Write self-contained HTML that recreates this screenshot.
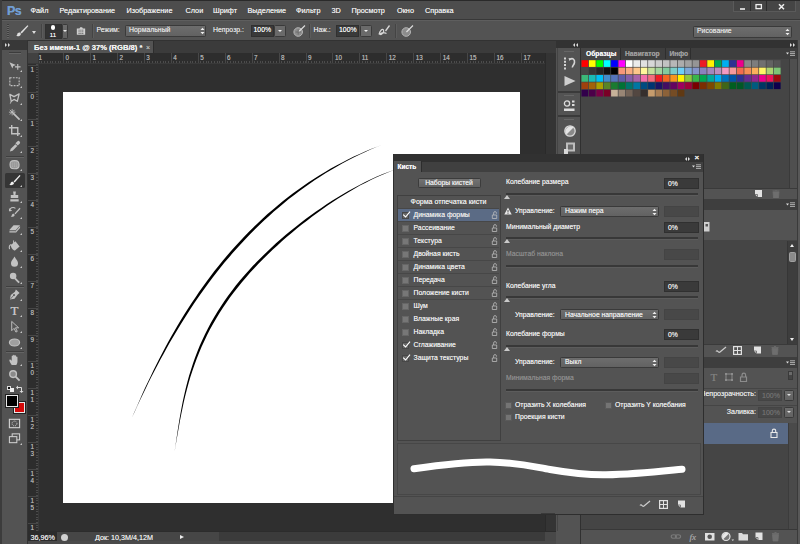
<!DOCTYPE html>
<html lang="ru"><head><meta charset="utf-8"><title>Photoshop</title>
<style>
*{margin:0;padding:0;box-sizing:border-box}
html,body{width:800px;height:544px;overflow:hidden;background:#535353}
body{position:relative;text-shadow:0 0 .6px currentColor;font-family:"Liberation Sans",sans-serif;font-size:7.5px;color:#dcdcdc;line-height:1}
div,span,i,b,em,svg{position:absolute}
.t{white-space:nowrap}
/* menu */
#menu{left:0;top:0;width:800px;height:20px;background:#4d4d4d;border-top:1px solid #2a2a2a;border-bottom:1px solid #383838}
#menu .t{top:6.1px;font-size:7.3px;color:#e6e6e6}
#ps{left:7px;top:2.5px;font-size:13.5px;font-weight:bold;color:#719dd2;letter-spacing:-0.6px;transform:scaleX(.92);transform-origin:0 0}
#wc{left:733px;top:0;width:63px;height:11px;background:#454545;border:1px solid #5a5a5a;border-top:0}
#wc b{top:0;width:1px;height:10px;background:#2c2c2c}
/* options */
#opt{left:0;top:20px;width:800px;height:21px;background:#535353;border-bottom:1px solid #323232;border-top:1px solid #5e5e5e}
#opt .t{top:6.3px;font-size:6.9px}
.dd{background:linear-gradient(#6d6d6d,#626262);border:1px solid #3a3a3a;border-radius:1.5px}
.in{background:#3a3a3a;border:1px solid #303030}
/* doc */
#tabbar{left:28px;top:41px;width:528px;height:12px;background:#3b3b3b}
#tab{left:28px;top:41px;width:126px;height:12px;background:#535353;border-right:1px solid #2d2d2d}
#tab .t{left:6px;top:3.3px;font-size:7.6px;font-weight:bold;color:#f0f0f0}
#paste{left:28px;top:53px;width:528px;height:478px;background:#2f2f2f}
#hr{left:28px;top:53px;width:517px;height:11px;background:#2d2d2d;border-bottom:1px solid #393939;overflow:hidden}
#hr b{top:0;width:1px;height:11px;background:#474747;margin-left:-28px}
#hr span{top:1.8px;font-size:6.3px;color:#adadad;margin-left:-28px}
#hr i{left:0;top:8px;width:517px;height:2px;background:repeating-linear-gradient(90deg,#4c4c4c 0 1px,transparent 1px 2.694px)}
#vr{left:28px;top:64px;width:11px;height:467px;background:#2d2d2d;border-right:1px solid #393939;overflow:hidden}
#vr b{left:0;width:11px;height:1px;background:#474747;margin-top:-64px}
#vr span{left:2.5px;font-size:6.3px;line-height:6.4px;color:#adadad;margin-top:-64px}
#vr i{left:8px;top:0;width:2px;height:467px;background:repeating-linear-gradient(180deg,#4c4c4c 0 1px,transparent 1px 2.694px)}
#corner{left:28px;top:53px;width:11px;height:11px;background:#414141;border-right:1px solid #383838;border-bottom:1px solid #383838}
#canvas{left:63px;top:92px;width:457px;height:411px;background:#fff}
#vs{left:545px;top:53px;width:11px;height:478px;background:#343434;border-left:1px solid #2a2a2a}
#status{left:28px;top:531px;width:528px;height:10px;background:#3b3b3b;border-top:1px solid #2c2c2c}
#status .t{top:1.5px;font-size:7.2px;color:#e4e4e4}
/* tools */
#tools{left:2px;top:40px;width:26px;height:504px;background:#535353;border-right:1px solid #333}
#tools .hd{left:0;top:0;width:25px;height:9.5px;background:#383838}
#tools svg{left:5.5px;width:13px;height:13px;overflow:visible;margin-top:.5px}
/* dock */
#dockhd{left:556px;top:40px;width:244px;height:8px;background:#323232}
#icons{left:557px;top:48px;width:23px;height:483px;background:#535353;border-left:1px solid #444}
#icons hr{position:absolute;left:0;width:23px;height:2px;border:0;background:#3a3a3a}
#icons u{position:absolute;left:6px;width:10px;height:1px;background:#3e3e3e;border-bottom:1px solid #666}
#rp{left:580px;top:48px;width:220px;height:496px;background:#454545;border-left:1px solid #303030}
.ptabs{left:581px;width:219px;height:11px;background:#3e3e3e}
#swa i{width:7.4px;height:7.4px;border-right:0.7px solid #3a3a3a;border-bottom:0.7px solid #3a3a3a}
.bar{left:581px;width:216px;background:#535353}
/* brush panel */
#bp{left:393px;top:154px;width:311px;height:361px;background:#535353;border:1px solid #2e2e2e;border-top:0}
#bp .top{left:0;top:0;width:309px;height:7.5px;background:#313131}
#bp .tb{left:0;top:7.5px;width:309px;height:10.5px;background:#404040}
#bp .tab{left:0;top:7px;width:28px;height:11px;background:#535353;border-right:1px solid #2d2d2d}
#bpc .t{font-size:6.8px;color:#e6e6e6;margin-top:.6px}
#bpc .dim{color:#8a8a8a}
.row{left:398px;width:101px;height:12.93px}
.row.ln{border-bottom:1px solid #474747}
.row.sel{background:#5b6b85}
.row span{left:15.5px;top:3.2px;font-size:6.85px;white-space:nowrap;color:#e6e6e6}
.cb{left:4px;top:3px;width:7.2px;height:7.2px;background:#777;border:1px solid #666}
.cb.on{background:#646464;border-color:#474747}
.ck{left:3.5px;top:1.5px;width:10px;height:10px;overflow:visible}
.lk{left:92.5px;top:2px;width:7px;height:8px}
.sl{left:506px;width:192px;height:3px;background:#383838;border-bottom:1px solid #5c5c5c}
.tri{width:0;height:0;border-left:3.2px solid transparent;border-right:3.2px solid transparent;border-bottom:4.4px solid #cacaca}
.cbx{width:7.2px;height:7.2px;background:#747474;border:1px solid #5a5a5a}
.box{background:#484848;border:1px solid #444}
</style></head><body>

<!-- menu bar -->
<div id="menu">
<span id="ps">Ps</span>
<span class="t" style="left:30.5px">Файл</span>
<span class="t" style="left:59.5px">Редактирование</span>
<span class="t" style="left:126.5px">Изображение</span>
<span class="t" style="left:185.5px">Слои</span>
<span class="t" style="left:213px">Шрифт</span>
<span class="t" style="left:247.5px">Выделение</span>
<span class="t" style="left:296px">Фильтр</span>
<span class="t" style="left:331.5px">3D</span>
<span class="t" style="left:351.5px">Просмотр</span>
<span class="t" style="left:397px">Окно</span>
<span class="t" style="left:425px">Справка</span>
<div id="wc"><b style="left:16px"></b><b style="left:32px"></b>
<svg style="left:0;top:0" width="63" height="11" viewBox="0 0 63 11"><path d="M6 8h5" stroke="#eee" stroke-width="1.6"/><rect x="22" y="3.6" width="5.4" height="4" fill="none" stroke="#eee" stroke-width="1.3"/><path d="M45 3.2l5 5M50 3.2l-5 5" stroke="#eee" stroke-width="1.5"/></svg></div>
</div>

<!-- options bar -->
<div id="opt">
<i style="left:7px;top:3px;width:2px;height:14px;background:repeating-linear-gradient(#3e3e3e 0 1px,#666 1px 2px)"></i>
<svg style="left:14px;top:3px" width="16" height="14" viewBox="0 0 16 14"><path d="M13.5 1.2L6.5 8.2l1.2 1.2L14.4 2z" fill="#e0e0e0"/><path d="M6 8.6c-1.6-.2-2.6.6-2.8 1.8-.1.8-.6 1.2-1.4 1.4 1.8.8 4 .4 4.8-.8.5-.8.3-1.8-.6-2.4z" fill="#e0e0e0"/></svg>
<i class="tri" style="left:32px;top:9.5px;border-bottom:0;border-top:3px solid #ddd;border-left-width:2px;border-right-width:2px"></i>
<div class="in" style="left:44.5px;top:2.5px;width:17px;height:15px;background:#333"></div>
<i style="left:50.5px;top:4px;width:4.5px;height:4.5px;border-radius:50%;background:#fff"></i>
<span class="t" style="left:49.8px;top:10.5px;font-size:6px;color:#f0f0f0">11</span>
<div class="dd" style="left:62px;top:2.5px;width:6px;height:15px"></div>
<i class="tri" style="left:63px;top:9px;border-bottom:0;border-top:2.5px solid #e8e8e8;border-left-width:2px;border-right-width:2px"></i>
<svg style="left:76px;top:5px" width="10" height="10" viewBox="0 0 12 12"><path d="M1 3h3.2l.8-1.4h2.4L8.2 3H11v7.5H1z" fill="#cfcfcf"/><path d="M3 5h6M3 7h6M3 9h6" stroke="#555" stroke-width="1" stroke-dasharray="1.4 .8"/></svg>
<i style="left:41px;top:3px;width:1px;height:14px;background:#444;border-right:1px solid #5c5c5c;width:2px"></i><i style="left:91.5px;top:3px;width:1px;height:14px;background:#444;border-right:1px solid #5c5c5c;width:2px"></i><i style="left:308.5px;top:3px;width:1px;height:14px;background:#444;border-right:1px solid #5c5c5c;width:2px"></i><i style="left:395px;top:3px;width:1px;height:14px;background:#444;border-right:1px solid #5c5c5c;width:2px"></i>
<span class="t" style="left:96.5px">Режим:</span>
<div class="dd" style="left:125px;top:4px;width:81px;height:11.5px"></div>
<span class="t" style="left:129px">Нормальный</span>
<svg style="left:199.5px;top:6px" width="5" height="8" viewBox="0 0 5 8"><path d="M.5 3L2.5.8l2 2.2zM.5 5l2 2.2L4.500 5z" fill="#eee"/></svg>
<span class="t" style="left:213px">Непрозр.:</span>
<div class="in" style="left:250.5px;top:4px;width:23px;height:11.5px"></div>
<span class="t" style="left:253.5px;color:#f0f0f0">100%</span>
<div class="dd" style="left:274px;top:4px;width:11.5px;height:11.5px;background:#6a6a6a"></div>
<i class="tri" style="left:277.700px;top:9px;border-bottom:0;border-top:2.5px solid #eee;border-left-width:2px;border-right-width:2px"></i>
<svg style="left:292px;top:3px" width="14" height="14" viewBox="0 0 14 14"><circle cx="6.2" cy="8" r="4.3" fill="#8d8d8d" stroke="#b5b5b5" stroke-width="1"/><path d="M12.6 1L6 7.6l.9.9L13.400 1.900z" fill="#ddd"/><path d="M3.500 8h5.400M6.200 5.300v5.400" stroke="#666" stroke-width=".8"/></svg>
<span class="t" style="left:313.5px">Наж.:</span>
<div class="in" style="left:336px;top:4px;width:23px;height:11.5px"></div>
<span class="t" style="left:339px;color:#f0f0f0">100%</span>
<div class="dd" style="left:359.500px;top:4px;width:12px;height:11.5px;background:#6a6a6a"></div>
<i class="tri" style="left:363.500px;top:9px;border-bottom:0;border-top:2.5px solid #eee;border-left-width:2px;border-right-width:2px"></i>
<svg style="left:377px;top:3px" width="14" height="14" viewBox="0 0 14 14"><path d="M2 10.500c1-4.500 3.500-6 4.500-4.500s-1.500 5-3 4.500 2-3 6-1" fill="none" stroke="#d8d8d8" stroke-width="1.2"/><path d="M12.500 1.500L8.500 7" stroke="#d8d8d8" stroke-width="1.300"/></svg>
<svg style="left:400px;top:3px" width="14" height="14" viewBox="0 0 14 14"><circle cx="6.2" cy="8" r="4.300" fill="#8d8d8d" stroke="#b5b5b5" stroke-width="1"/><path d="M12.600 1L6 7.600l.9.900L13.400 1.900z" fill="#ddd"/></svg>
<div class="dd" style="left:693px;top:4.500px;width:99px;height:12px"></div>
<span class="t" style="left:697px;top:7px">Рисование</span>
<svg style="left:785px;top:7px" width="5" height="8" viewBox="0 0 5 8"><path d="M.5 3L2.500.8l2 2.200zM.5 5l2 2.200L4.500 5z" fill="#eee"/></svg>
</div>

<!-- tools -->
<div id="tools"><div class="hd"></div>
<i style="left:3px;top:3.300px;width:0;height:0;border-left:2.500px solid #ddd;border-top:2px solid transparent;border-bottom:2px solid transparent"></i>
<i style="left:6px;top:3.300px;width:0;height:0;border-left:2.500px solid #ddd;border-top:2px solid transparent;border-bottom:2px solid transparent"></i>
<i style="left:7px;top:11.500px;width:12px;height:1px;background:#3c3c3c;border-bottom:1px solid #666;height:2px"></i>
<svg style="top:18px" viewBox="0 0 14 14"><path d="M1.500 3.500l7 3-2.800 1-1 2.800z" fill="#c2c2c2"/><path d="M10.500 5.500v6M7.500 8.500h6" stroke="#c2c2c2" stroke-width="1.200"/></svg><i style="left:17.5px;top:29.5px;width:0;height:0;border-bottom:2.3px solid #c8c8c8;border-left:2.3px solid transparent"></i><svg style="top:34.5px" viewBox="0 0 14 14"><rect x="2" y="3" width="10" height="8.500" fill="none" stroke="#c2c2c2" stroke-width="1.200" stroke-dasharray="2 1.200"/></svg><i style="left:17.5px;top:46.0px;width:0;height:0;border-bottom:2.3px solid #c8c8c8;border-left:2.3px solid transparent"></i><svg style="top:51px" viewBox="0 0 14 14"><path d="M2 2.500l4.500 2.500L12 2l-2 8-3.500-2L3.500 10z" fill="none" stroke="#c2c2c2" stroke-width="1.400" stroke-linejoin="round"/><path d="M3.500 10l-1 2.500" stroke="#c2c2c2" stroke-width="1"/></svg><i style="left:17.5px;top:62.5px;width:0;height:0;border-bottom:2.3px solid #c8c8c8;border-left:2.3px solid transparent"></i><svg style="top:67px" viewBox="0 0 14 14"><path d="M5.500 5.500l7 7" stroke="#c2c2c2" stroke-width="1.800"/><path d="M4.500 1v7M1 4.500h7M2 2l5 5M7 2L2 7" stroke="#c2c2c2" stroke-width=".9"/></svg><i style="left:17.5px;top:78.5px;width:0;height:0;border-bottom:2.3px solid #c8c8c8;border-left:2.3px solid transparent"></i><svg style="top:83px" viewBox="0 0 14 14"><path d="M4 1v9.500h9M1 4h9.500v9" fill="none" stroke="#c2c2c2" stroke-width="1.500"/></svg><i style="left:17.5px;top:94.5px;width:0;height:0;border-bottom:2.3px solid #c8c8c8;border-left:2.3px solid transparent"></i><svg style="top:99.5px" viewBox="0 0 14 14"><path d="M2 12.500l1-3 5-5 2 2-5 5z" fill="#c2c2c2"/><path d="M8 3.500l2-2a1.500 1.500 0 0 1 2.500 2.500l-2 2z" fill="#c2c2c2"/></svg><i style="left:17.5px;top:111.0px;width:0;height:0;border-bottom:2.3px solid #c8c8c8;border-left:2.3px solid transparent"></i><svg style="top:117px" viewBox="0 0 14 14"><path d="M3 4c1-1.500 7-1.500 8 0s1.500 5 0 6.500-7 1.500-8 0S1.800 5.500 3 4z" fill="#9a9a9a" stroke="#c2c2c2" stroke-width="1.200"/><path d="M4.500 5.500h5M4.500 7.500h5M4.500 9h5" stroke="#c2c2c2" stroke-width=".6" stroke-dasharray="1 1"/></svg><i style="left:17.5px;top:128.5px;width:0;height:0;border-bottom:2.3px solid #c8c8c8;border-left:2.3px solid transparent"></i><i style="left:2.5px;top:132.5px;width:20px;height:15px;background:#353535;border-radius:1.5px"></i><svg style="top:133px" viewBox="0 0 14 14"><path d="M12.500 1L6 8l1.200 1.200L13.500 2z" fill="#f2f2f2"/><path d="M5.500 8.500c-1.600-.2-2.600.6-2.800 1.800-.1.800-.6 1.200-1.400 1.400 1.800.8 4 .4 4.800-.8.500-.8.300-1.800-.6-2.400z" fill="#f2f2f2"/></svg><i style="left:17.5px;top:144.5px;width:0;height:0;border-bottom:2.3px solid #c8c8c8;border-left:2.3px solid transparent"></i><svg style="top:149px" viewBox="0 0 14 14"><path d="M5.500 1.500h3l-.5 4h3v3h-8v-3h3zM2.500 10h9v2.500h-9z" fill="#c2c2c2"/></svg><i style="left:17.5px;top:160.5px;width:0;height:0;border-bottom:2.3px solid #c8c8c8;border-left:2.3px solid transparent"></i><svg style="top:165px" viewBox="0 0 14 14"><path d="M12.500 2L7 8l1 1 5.500-6z" fill="#c2c2c2"/><path d="M6.500 8.500c-1.300-.2-2.200.5-2.400 1.500-.1.700-.5 1-1.200 1.200 1.500.7 3.400.3 4-.7.500-.7.300-1.500-.4-2z" fill="#c2c2c2"/><path d="M1.500 5.500A4 4 0 0 1 8 2.500" fill="none" stroke="#c2c2c2" stroke-width="1.200"/><path d="M1 2.500l.5 3.500 3-1z" fill="#c2c2c2"/></svg><i style="left:17.5px;top:176.5px;width:0;height:0;border-bottom:2.3px solid #c8c8c8;border-left:2.3px solid transparent"></i><svg style="top:181.5px" viewBox="0 0 14 14"><path d="M6 3.500h7L8.500 8.500h-7z" fill="#c2c2c2"/><path d="M1.500 9.300h7v2.200h-7z" fill="#a8a8a8"/><path d="M8.500 9.300L13 4.300v2.200L8.500 11.500z" fill="#bbb"/></svg><i style="left:17.5px;top:193.0px;width:0;height:0;border-bottom:2.3px solid #c8c8c8;border-left:2.3px solid transparent"></i><svg style="top:198px" viewBox="0 0 14 14"><path d="M3 6.500l5-4 4.500 5.500-5 4.500c-2 0-4.500-3-4.500-6z" fill="#c2c2c2"/><path d="M3.500 6c-1.500.5-2.500 2.500-1.800 5" fill="none" stroke="#c2c2c2" stroke-width="1.200"/><path d="M6 1.500v5" stroke="#c2c2c2" stroke-width="1"/></svg><i style="left:17.5px;top:209.5px;width:0;height:0;border-bottom:2.3px solid #c8c8c8;border-left:2.3px solid transparent"></i><svg style="top:214px" viewBox="0 0 14 14"><path d="M7 1.500c2 3.500 3.800 5 3.800 7.300a3.800 3.800 0 0 1-7.600 0C3.200 6.500 5 5 7 1.500z" fill="#c2c2c2"/></svg><i style="left:17.5px;top:225.5px;width:0;height:0;border-bottom:2.3px solid #c8c8c8;border-left:2.3px solid transparent"></i><svg style="top:230px" viewBox="0 0 14 14"><circle cx="5.500" cy="5.500" r="3.500" fill="#c2c2c2"/><path d="M7.500 8l4.500 4.500" stroke="#c2c2c2" stroke-width="2"/></svg><i style="left:17.5px;top:241.5px;width:0;height:0;border-bottom:2.3px solid #c8c8c8;border-left:2.3px solid transparent"></i><svg style="top:247px" viewBox="0 0 14 14"><path d="M8.500 1.500l4 4-2 1.500-3.500 4.500-5 1 1-5 4.500-3.500z" fill="#c2c2c2"/><circle cx="6.500" cy="7.500" r="1" fill="#555"/><path d="M2.500 12l4-4.500" stroke="#555" stroke-width=".8"/></svg><i style="left:17.5px;top:258.5px;width:0;height:0;border-bottom:2.3px solid #c8c8c8;border-left:2.3px solid transparent"></i><svg style="top:263px" viewBox="0 0 14 14"><text x="7" y="12" text-anchor="middle" font-family="Liberation Serif,serif" font-size="14" fill="#c2c2c2">T</text></svg><i style="left:17.5px;top:274.5px;width:0;height:0;border-bottom:2.3px solid #c8c8c8;border-left:2.3px solid transparent"></i><svg style="top:279px" viewBox="0 0 14 14"><path d="M4 1.500v10l2.500-2.500 2 4 1.500-.8-2-3.800h3.500z" fill="#555" stroke="#c2c2c2" stroke-width="1"/></svg><i style="left:17.5px;top:290.5px;width:0;height:0;border-bottom:2.3px solid #c8c8c8;border-left:2.3px solid transparent"></i><svg style="top:295px" viewBox="0 0 14 14"><ellipse cx="7" cy="7" rx="5.500" ry="3.800" fill="#a0a0a0" stroke="#c2c2c2" stroke-width="1.200"/></svg><i style="left:17.5px;top:306.5px;width:0;height:0;border-bottom:2.3px solid #c8c8c8;border-left:2.3px solid transparent"></i><svg style="top:312px" viewBox="0 0 14 14"><path d="M4 13c-1-2-3-4.500-2.500-5.500s1.800 0 2.500 1V3.500c0-1 1.500-1 1.500 0v-1c0-1 1.600-1 1.600 0v.8c0-1 1.600-1 1.600 0v1c0-1 1.500-.8 1.500.2V9c0 2-.7 3-1.200 4z" fill="#c2c2c2"/></svg><i style="left:17.5px;top:323.5px;width:0;height:0;border-bottom:2.3px solid #c8c8c8;border-left:2.3px solid transparent"></i><svg style="top:328px" viewBox="0 0 14 14"><circle cx="5.500" cy="5.500" r="3.600" fill="#8a8a8a" stroke="#c2c2c2" stroke-width="1.500"/><path d="M8.200 8.200l4.300 4.300" stroke="#c2c2c2" stroke-width="2"/></svg><i style="left:4px;top:115.5px;width:18px;height:2px;background:#3f3f3f;border-bottom:1px solid #646464"></i><i style="left:4px;top:245.5px;width:18px;height:2px;background:#3f3f3f;border-bottom:1px solid #646464"></i><i style="left:4px;top:310.5px;width:18px;height:2px;background:#3f3f3f;border-bottom:1px solid #646464"></i><i style="left:5px;top:345.5px;width:4px;height:4px;background:#111;border:0.5px solid #ddd"></i><i style="left:7.500px;top:348px;width:4px;height:4px;background:#eee"></i><svg style="left:14px;top:344px;width:8px;height:8px" viewBox="0 0 8 8"><path d="M1.500 2.500h4v4" fill="none" stroke="#ddd" stroke-width="1"/><path d="M0 2.500l2-2v4zM5.500 8l-2-2h4z" fill="#ddd"/></svg><i style="left:11.500px;top:361.500px;width:11.500px;height:11.500px;background:#d40a0a;border:1px solid #e8e8e8;outline:0.5px solid #222"></i><i style="left:4px;top:355px;width:12px;height:12px;background:#000;border:1px solid #e8e8e8;outline:0.5px solid #222"></i><svg style="top:376px" viewBox="0 0 14 14"><rect x="1.500" y="2.500" width="11" height="9" fill="none" stroke="#d2d2d2" stroke-width="1.200"/><circle cx="7" cy="7" r="2.600" fill="none" stroke="#d2d2d2" stroke-width="1" stroke-dasharray="1.200 1"/></svg><svg style="top:391px" viewBox="0 0 14 14"><rect x="4.500" y="2" width="8" height="6.500" fill="#555" stroke="#d2d2d2" stroke-width="1.100"/><rect x="1.500" y="5" width="8" height="6.500" fill="#555" stroke="#d2d2d2" stroke-width="1.100"/></svg><i style="left:17.500px;top:402.500px;width:0;height:0;border-bottom:2.300px solid #c8c8c8;border-left:2.300px solid transparent"></i>
</div>

<!-- document -->
<div id="tabbar"></div>
<div id="tab"><span class="t">Без имени-1 @ 37% (RGB/8) *</span><span class="t" style="left:118px;top:3px;font-weight:normal;color:#bbb;font-size:7px">×</span></div>
<div id="paste"></div>
<div id="canvas"></div>
<svg style="left:0;top:0" width="800" height="544" viewBox="0 0 800 544"><path d="M383.7 144.2L377.6 146.4L371.6 148.8L365.6 151.3L359.7 153.9L353.8 156.6L347.9 159.5L342.2 162.4L336.4 165.5L330.8 168.6L325.1 171.9L319.6 175.3L314.1 178.7L308.6 182.3L303.3 186.0L298.0 189.7L292.7 193.6L287.5 197.5L282.4 201.5L277.4 205.7L272.4 209.9L267.5 214.1L262.7 218.5L258.0 222.9L253.3 227.4L248.7 232.0L244.1 236.7L239.7 241.4L235.3 246.2L231.0 251.1L226.7 256.0L222.5 261.0L218.5 266.0L214.4 271.1L210.5 276.3L206.6 281.5L202.8 286.7L199.0 292.0L195.4 297.4L191.8 302.8L188.2 308.2L184.7 313.7L181.3 319.3L178.0 324.8L174.7 330.4L171.5 336.1L168.3 341.8L165.2 347.5L162.2 353.2L159.2 359.0L156.3 364.8L153.4 370.6L150.6 376.4L147.8 382.3L145.0 388.1L142.3 394.0L139.7 399.9L137.1 405.9L134.5 411.8L131.9 417.8L131.9 417.8L134.6 411.9L137.3 406.0L140.1 400.1L142.9 394.3L145.7 388.4L148.5 382.6L151.4 376.8L154.4 371.1L157.4 365.3L160.4 359.6L163.5 353.9L166.6 348.2L169.8 342.6L173.1 337.0L176.4 331.4L179.7 325.9L183.1 320.4L186.6 314.9L190.1 309.5L193.7 304.1L197.3 298.7L201.0 293.4L204.8 288.2L208.6 282.9L212.5 277.8L216.4 272.7L220.5 267.6L224.5 262.6L228.7 257.7L232.9 252.8L237.2 247.9L241.6 243.2L246.0 238.4L250.5 233.8L255.0 229.2L259.6 224.7L264.3 220.3L269.1 215.9L273.9 211.6L278.8 207.4L283.8 203.2L288.8 199.1L293.9 195.2L299.1 191.3L304.3 187.4L309.6 183.7L314.9 180.1L320.4 176.5L325.8 173.1L331.4 169.7L337.0 166.4L342.6 163.3L348.3 160.2L354.1 157.3L359.9 154.4L365.8 151.7L371.7 149.1L377.7 146.6L383.7 144.2Z" fill="#000"/><path d="M395.2 169.6L389.0 171.8L382.9 174.1L376.9 176.6L371.0 179.3L365.2 182.0L359.5 184.9L353.9 187.9L348.3 191.0L342.8 194.2L337.4 197.5L332.0 200.8L326.6 204.3L321.3 207.9L316.0 211.5L310.8 215.3L305.6 219.1L300.5 223.0L295.5 226.9L290.4 231.0L285.5 235.1L280.6 239.3L275.7 243.6L271.0 247.9L266.3 252.4L261.7 256.9L257.1 261.5L252.7 266.1L248.3 270.9L244.0 275.7L239.9 280.6L235.8 285.6L231.9 290.7L228.1 295.8L224.4 301.1L220.8 306.4L217.4 311.8L214.1 317.3L210.9 322.8L207.9 328.5L205.0 334.2L202.3 340.0L199.7 345.8L197.3 351.8L195.0 357.8L192.9 363.8L190.9 370.0L189.0 376.1L187.3 382.3L185.7 388.6L184.2 394.9L182.8 401.2L181.6 407.6L180.4 413.9L179.3 420.3L178.3 426.6L177.3 432.9L176.4 439.2L175.5 445.5L174.6 451.7L174.6 451.7L175.6 445.5L176.7 439.3L177.8 433.0L178.9 426.7L180.0 420.4L181.3 414.1L182.6 407.7L183.9 401.4L185.4 395.2L187.0 388.9L188.7 382.7L190.5 376.6L192.5 370.5L194.6 364.4L196.8 358.4L199.2 352.5L201.6 346.7L204.3 340.9L207.0 335.2L209.9 329.5L213.0 324.0L216.2 318.5L219.5 313.1L222.9 307.8L226.5 302.5L230.1 297.3L233.9 292.2L237.9 287.2L241.9 282.3L246.0 277.4L250.2 272.6L254.5 267.9L258.9 263.2L263.4 258.7L268.0 254.2L272.6 249.7L277.4 245.4L282.1 241.1L287.0 236.8L291.9 232.7L296.8 228.6L301.8 224.6L306.9 220.7L311.9 216.8L317.1 213.0L322.3 209.3L327.5 205.6L332.8 202.1L338.1 198.6L343.5 195.2L348.9 191.9L354.4 188.7L359.9 185.6L365.6 182.7L371.3 179.8L377.1 177.0L383.0 174.4L389.0 171.9L395.2 169.6Z" fill="#000"/></svg>
<div id="hr"><i></i><b style="left:36.1px"></b><span style="left:38.6px">1</span><b style="left:63.0px"></b><span style="left:65.5px">0</span><b style="left:89.9px"></b><span style="left:92.4px">1</span><b style="left:116.9px"></b><span style="left:119.4px">2</span><b style="left:143.8px"></b><span style="left:146.3px">3</span><b style="left:170.8px"></b><span style="left:173.3px">4</span><b style="left:197.7px"></b><span style="left:200.2px">5</span><b style="left:224.6px"></b><span style="left:227.1px">6</span><b style="left:251.6px"></b><span style="left:254.1px">7</span><b style="left:278.5px"></b><span style="left:281.0px">8</span><b style="left:305.5px"></b><span style="left:308.0px">9</span><b style="left:332.4px"></b><span style="left:334.9px">10</span><b style="left:359.3px"></b><span style="left:361.8px">11</span><b style="left:386.3px"></b><span style="left:388.8px">12</span><b style="left:413.2px"></b><span style="left:415.7px">13</span><b style="left:440.2px"></b><span style="left:442.7px">14</span><b style="left:467.1px"></b><span style="left:469.6px">15</span><b style="left:494.0px"></b><span style="left:496.5px">16</span><b style="left:521.0px"></b><span style="left:523.5px">17</span></div>
<div id="vr"><i></i><b style="top:65.1px"></b><span style="top:67.1px">1</span><b style="top:92.0px"></b><span style="top:94.0px">0</span><b style="top:118.9px"></b><span style="top:120.9px">1</span><b style="top:145.9px"></b><span style="top:147.9px">2</span><b style="top:172.8px"></b><span style="top:174.8px">3</span><b style="top:199.8px"></b><span style="top:201.8px">4</span><b style="top:226.7px"></b><span style="top:228.7px">5</span><b style="top:253.6px"></b><span style="top:255.6px">6</span><b style="top:280.6px"></b><span style="top:282.6px">7</span><b style="top:307.5px"></b><span style="top:309.5px">8</span><b style="top:334.5px"></b><span style="top:336.5px">9</span><b style="top:361.4px"></b><span style="top:363.4px">1<br>0</span><b style="top:388.3px"></b><span style="top:390.3px">1<br>1</span><b style="top:415.3px"></b><span style="top:417.3px">1<br>2</span><b style="top:442.2px"></b><span style="top:444.2px">1<br>3</span><b style="top:469.2px"></b><span style="top:471.2px">1<br>4</span><b style="top:496.1px"></b><span style="top:498.1px">1<br>5</span><b style="top:523.0px"></b><span style="top:525.0px">1<br>6</span></div>
<div id="corner"></div>
<div id="vs"></div>
<div id="status">
<div style="left:0;top:0;width:29px;height:10px;background:#2c2c2c"></div><span class="t" style="left:2.500px">36,96%</span><div style="left:517px;top:0;width:11px;height:10px;background:#484848"></div>
<div style="left:29px;top:0;width:162px;height:10px;background:#464646"></div>
<i style="left:33px;top:1.500px;width:7px;height:7px;border-radius:50%;background:#d0d0d0"></i>
<span class="t" style="left:67px">Док: 10,3M/4,12M</span>
<i style="left:151.500px;top:2.500px;width:0;height:0;border-left:4px solid #eee;border-top:2.500px solid transparent;border-bottom:2.500px solid transparent"></i>
</div>
<div style="left:28px;top:541px;width:528px;height:3px;background:#4a4a4a"></div>

<!-- right dock -->
<div id="dockhd">
<i style="left:16.500px;top:3px;width:0;height:0;border-right:2.500px solid #ddd;border-top:2px solid transparent;border-bottom:2px solid transparent"></i>
<i style="left:19.500px;top:3px;width:0;height:0;border-right:2.500px solid #ddd;border-top:2px solid transparent;border-bottom:2px solid transparent"></i>
<i style="left:234px;top:3px;width:0;height:0;border-left:2.500px solid #ddd;border-top:2px solid transparent;border-bottom:2px solid transparent"></i>
<i style="left:237px;top:3px;width:0;height:0;border-left:2.500px solid #ddd;border-top:2px solid transparent;border-bottom:2px solid transparent"></i>
</div>
<div id="icons">
<u style="top:3px"></u>
<svg style="left:4px;top:8px" width="15" height="14" viewBox="0 0 15 14"><path d="M2 1.500h2v2H2zM2 4.800h2v2H2zM2 8.100h2v2H2zM2 11.400h2v2H2z" fill="#d4d4d4"/><path d="M8 3.500c2.500-2 5 0 4.500 3S10 10 10.500 11.500" fill="none" stroke="#d4d4d4" stroke-width="1.600"/><path d="M6.500 2l3 .5-2 2.500z" fill="#d4d4d4"/></svg>
<svg style="left:5px;top:27px" width="14" height="12" viewBox="0 0 14 12"><path d="M1.500 1L12.500 6 1.500 11z" fill="#cfcfcf"/></svg>
<hr style="top:42.500px">
<u style="top:47px"></u>
<svg style="left:4px;top:51px" width="15" height="13" viewBox="0 0 15 13"><circle cx="5" cy="4.500" r="2.600" fill="none" stroke="#ddd" stroke-width="1.300"/><path d="M10 1.500h2.500v2H10zM10 5h2.500v2H10zM2 9.500h10.500v2.500H2z" fill="#ddd"/></svg>
<hr style="top:66.500px">
<u style="top:71px"></u>
<svg style="left:5px;top:76px" width="14" height="14" viewBox="0 0 14 14"><circle cx="7" cy="7" r="5.200" fill="#8a8a8a" stroke="#d8d8d8" stroke-width="1.300"/><path d="M3.500 10.500A5 5 0 0 1 10.500 3.500z" fill="#e4e4e4"/></svg>
<svg style="left:5px;top:93px" width="14" height="14" viewBox="0 0 14 14"><path d="M3 1.500h9v9H3z" fill="#bdbdbd"/><path d="M5 3.500h5v5H5z" fill="#6a6a6a"/><path d="M1 8h4v5H1z" fill="#d8d8d8"/></svg>
</div>
<div id="rp"></div>
<div class="ptabs" style="top:48px"></div>
<div style="left:581px;top:48px;width:40px;height:11.500px;background:#454545;border-right:1px solid #2e2e2e"></div>
<span class="t" style="left:586px;top:50.500px;font-size:6.700px;font-weight:bold;color:#f2f2f2">Образцы</span>
<span class="t" style="left:625px;top:50.500px;font-size:6.700px;font-weight:bold;color:#9a9a9a">Навигатор</span>
<i style="left:664.500px;top:48px;width:1px;height:11px;background:#2e2e2e"></i>
<span class="t" style="left:669.500px;top:50.500px;font-size:6.700px;font-weight:bold;color:#9a9a9a">Инфо</span>
<i style="left:690px;top:48px;width:1px;height:11px;background:#2e2e2e"></i>
<svg style="left:786px;top:51px" width="9" height="6" viewBox="0 0 9 6"><path d="M0 1.500l1.500 2 1.500-2z" fill="#ddd"/><path d="M4 .8h5M4 2.600h5M4 4.400h5" stroke="#bbb" stroke-width=".9"/></svg>
<div id="swa"><svg style="left:581px;top:60px" width="210" height="40" viewBox="0 0 210 40"><rect x="0.5" y="0.2" width="6.7" height="6.7" fill="#ff0000"/><rect x="7.9" y="0.2" width="6.7" height="6.7" fill="#ffff00"/><rect x="15.3" y="0.2" width="6.7" height="6.7" fill="#00ff00"/><rect x="22.7" y="0.2" width="6.7" height="6.7" fill="#00ffff"/><rect x="30.1" y="0.2" width="6.7" height="6.7" fill="#0000ff"/><rect x="37.5" y="0.2" width="6.7" height="6.7" fill="#ff00ff"/><rect x="44.9" y="0.2" width="6.7" height="6.7" fill="#ffffff"/><rect x="52.3" y="0.2" width="6.7" height="6.7" fill="#ebebeb"/><rect x="59.7" y="0.2" width="6.7" height="6.7" fill="#e1e1e1"/><rect x="67.1" y="0.2" width="6.7" height="6.7" fill="#d7d7d7"/><rect x="74.5" y="0.2" width="6.7" height="6.7" fill="#cccccc"/><rect x="81.9" y="0.2" width="6.7" height="6.7" fill="#c2c2c2"/><rect x="89.3" y="0.2" width="6.7" height="6.7" fill="#b7b7b7"/><rect x="96.7" y="0.2" width="6.7" height="6.7" fill="#acacac"/><rect x="104.1" y="0.2" width="6.7" height="6.7" fill="#a1a1a1"/><rect x="111.5" y="0.2" width="6.7" height="6.7" fill="#959595"/><rect x="118.9" y="0.2" width="6.7" height="6.7" fill="#ed1c24"/><rect x="126.3" y="0.2" width="6.7" height="6.7" fill="#fff200"/><rect x="133.7" y="0.2" width="6.7" height="6.7" fill="#00a651"/><rect x="141.1" y="0.2" width="6.7" height="6.7" fill="#00aeef"/><rect x="148.5" y="0.2" width="6.7" height="6.7" fill="#2e3192"/><rect x="155.9" y="0.2" width="6.7" height="6.7" fill="#ec008c"/><rect x="163.3" y="0.2" width="6.7" height="6.7" fill="#898989"/><rect x="170.7" y="0.2" width="6.7" height="6.7" fill="#7d7d7d"/><rect x="178.1" y="0.2" width="6.7" height="6.7" fill="#707070"/><rect x="185.5" y="0.2" width="6.7" height="6.7" fill="#626262"/><rect x="192.9" y="0.2" width="6.7" height="6.7" fill="#555555"/><rect x="0.5" y="7.6" width="6.7" height="6.7" fill="#464646"/><rect x="7.9" y="7.6" width="6.7" height="6.7" fill="#363636"/><rect x="15.3" y="7.6" width="6.7" height="6.7" fill="#262626"/><rect x="22.7" y="7.6" width="6.7" height="6.7" fill="#111111"/><rect x="30.1" y="7.6" width="6.7" height="6.7" fill="#000000"/><rect x="37.5" y="7.6" width="6.7" height="6.7" fill="#f7977a"/><rect x="44.9" y="7.6" width="6.7" height="6.7" fill="#f9ad81"/><rect x="52.3" y="7.6" width="6.7" height="6.7" fill="#fdc68a"/><rect x="59.7" y="7.6" width="6.7" height="6.7" fill="#fff79a"/><rect x="67.1" y="7.6" width="6.7" height="6.7" fill="#c4df9b"/><rect x="74.5" y="7.6" width="6.7" height="6.7" fill="#a2d39c"/><rect x="81.9" y="7.6" width="6.7" height="6.7" fill="#82ca9d"/><rect x="89.3" y="7.6" width="6.7" height="6.7" fill="#7bcdc8"/><rect x="96.7" y="7.6" width="6.7" height="6.7" fill="#6ecff6"/><rect x="104.1" y="7.6" width="6.7" height="6.7" fill="#7ea7d8"/><rect x="111.5" y="7.6" width="6.7" height="6.7" fill="#8493ca"/><rect x="118.9" y="7.6" width="6.7" height="6.7" fill="#8882be"/><rect x="126.3" y="7.6" width="6.7" height="6.7" fill="#a187be"/><rect x="133.7" y="7.6" width="6.7" height="6.7" fill="#bc8dbf"/><rect x="141.1" y="7.6" width="6.7" height="6.7" fill="#f49ac2"/><rect x="148.5" y="7.6" width="6.7" height="6.7" fill="#f6989d"/><rect x="155.9" y="7.6" width="6.7" height="6.7" fill="#f26c4f"/><rect x="163.3" y="7.6" width="6.7" height="6.7" fill="#f68e55"/><rect x="170.7" y="7.6" width="6.7" height="6.7" fill="#fbaf5c"/><rect x="178.1" y="7.6" width="6.7" height="6.7" fill="#fff467"/><rect x="185.5" y="7.6" width="6.7" height="6.7" fill="#acd372"/><rect x="192.9" y="7.6" width="6.7" height="6.7" fill="#7cc576"/><rect x="0.5" y="15.0" width="6.7" height="6.7" fill="#3bb878"/><rect x="7.9" y="15.0" width="6.7" height="6.7" fill="#1abbb4"/><rect x="15.3" y="15.0" width="6.7" height="6.7" fill="#00bff3"/><rect x="22.7" y="15.0" width="6.7" height="6.7" fill="#438cca"/><rect x="30.1" y="15.0" width="6.7" height="6.7" fill="#5574b9"/><rect x="37.5" y="15.0" width="6.7" height="6.7" fill="#605ca8"/><rect x="44.9" y="15.0" width="6.7" height="6.7" fill="#855fa8"/><rect x="52.3" y="15.0" width="6.7" height="6.7" fill="#a763a8"/><rect x="59.7" y="15.0" width="6.7" height="6.7" fill="#f06eaa"/><rect x="67.1" y="15.0" width="6.7" height="6.7" fill="#f26d7d"/><rect x="74.5" y="15.0" width="6.7" height="6.7" fill="#ed1c24"/><rect x="81.9" y="15.0" width="6.7" height="6.7" fill="#f26522"/><rect x="89.3" y="15.0" width="6.7" height="6.7" fill="#f7941d"/><rect x="96.7" y="15.0" width="6.7" height="6.7" fill="#fff200"/><rect x="104.1" y="15.0" width="6.7" height="6.7" fill="#8dc73f"/><rect x="111.5" y="15.0" width="6.7" height="6.7" fill="#39b54a"/><rect x="118.9" y="15.0" width="6.7" height="6.7" fill="#00a651"/><rect x="126.3" y="15.0" width="6.7" height="6.7" fill="#00a99d"/><rect x="133.7" y="15.0" width="6.7" height="6.7" fill="#00aeef"/><rect x="141.1" y="15.0" width="6.7" height="6.7" fill="#0072bc"/><rect x="148.5" y="15.0" width="6.7" height="6.7" fill="#0054a6"/><rect x="155.9" y="15.0" width="6.7" height="6.7" fill="#2e3192"/><rect x="163.3" y="15.0" width="6.7" height="6.7" fill="#662d91"/><rect x="170.7" y="15.0" width="6.7" height="6.7" fill="#92278f"/><rect x="178.1" y="15.0" width="6.7" height="6.7" fill="#ec008c"/><rect x="185.5" y="15.0" width="6.7" height="6.7" fill="#ed145b"/><rect x="192.9" y="15.0" width="6.7" height="6.7" fill="#9e0b0f"/><rect x="0.5" y="22.4" width="6.7" height="6.7" fill="#a0410d"/><rect x="7.9" y="22.4" width="6.7" height="6.7" fill="#a36209"/><rect x="15.3" y="22.4" width="6.7" height="6.7" fill="#aba000"/><rect x="22.7" y="22.4" width="6.7" height="6.7" fill="#598527"/><rect x="30.1" y="22.4" width="6.7" height="6.7" fill="#1a7b30"/><rect x="37.5" y="22.4" width="6.7" height="6.7" fill="#007236"/><rect x="44.9" y="22.4" width="6.7" height="6.7" fill="#00746b"/><rect x="52.3" y="22.4" width="6.7" height="6.7" fill="#0076a3"/><rect x="59.7" y="22.4" width="6.7" height="6.7" fill="#004b80"/><rect x="67.1" y="22.4" width="6.7" height="6.7" fill="#003471"/><rect x="74.5" y="22.4" width="6.7" height="6.7" fill="#1b1464"/><rect x="81.9" y="22.4" width="6.7" height="6.7" fill="#440e62"/><rect x="89.3" y="22.4" width="6.7" height="6.7" fill="#630460"/><rect x="96.7" y="22.4" width="6.7" height="6.7" fill="#9e005d"/><rect x="104.1" y="22.4" width="6.7" height="6.7" fill="#9e0039"/><rect x="111.5" y="22.4" width="6.7" height="6.7" fill="#790000"/><rect x="118.9" y="22.4" width="6.7" height="6.7" fill="#7b2e00"/><rect x="126.3" y="22.4" width="6.7" height="6.7" fill="#7d4900"/><rect x="133.7" y="22.4" width="6.7" height="6.7" fill="#827b00"/><rect x="141.1" y="22.4" width="6.7" height="6.7" fill="#406618"/><rect x="148.5" y="22.4" width="6.7" height="6.7" fill="#005e20"/><rect x="155.9" y="22.4" width="6.7" height="6.7" fill="#005826"/><rect x="163.3" y="22.4" width="6.7" height="6.7" fill="#005952"/><rect x="170.7" y="22.4" width="6.7" height="6.7" fill="#005b7f"/><rect x="178.1" y="22.4" width="6.7" height="6.7" fill="#003663"/><rect x="185.5" y="22.4" width="6.7" height="6.7" fill="#002157"/><rect x="192.9" y="22.4" width="6.7" height="6.7" fill="#0d004c"/><rect x="0.5" y="29.8" width="6.7" height="6.7" fill="#32004b"/><rect x="7.9" y="29.8" width="6.7" height="6.7" fill="#4b0049"/><rect x="15.3" y="29.8" width="6.7" height="6.7" fill="#7b0046"/><rect x="22.7" y="29.8" width="6.7" height="6.7" fill="#7a0026"/><rect x="30.1" y="29.8" width="6.7" height="6.7" fill="#c7b299"/><rect x="37.5" y="29.8" width="6.7" height="6.7" fill="#998675"/><rect x="44.9" y="29.8" width="6.7" height="6.7" fill="#736357"/><rect x="52.3" y="29.8" width="6.7" height="6.7" fill="#534741"/><rect x="59.7" y="29.8" width="6.7" height="6.7" fill="#362f2d"/><rect x="67.1" y="29.8" width="6.7" height="6.7" fill="#c69c6d"/><rect x="74.5" y="29.8" width="6.7" height="6.7" fill="#a67c52"/><rect x="81.9" y="29.8" width="6.7" height="6.7" fill="#8c6239"/><rect x="89.3" y="29.8" width="6.7" height="6.7" fill="#754c24"/><rect x="96.7" y="29.8" width="6.7" height="6.7" fill="#603913"/></svg></div>
<div style="left:789px;top:59px;width:8px;height:129px;background:#4f4f4f;border-left:1px solid #3a3a3a"></div>
<div class="bar" style="top:188px;height:11px;border-top:1px solid #3a3a3a"></div>
<svg style="left:754px;top:190px" width="9" height="8" viewBox="0 0 9 8"><path d="M1 0h7v7H3.500L1 4.500z" fill="#e2e2e2"/><path d="M1 4.500h2.500V7" fill="none" stroke="#666" stroke-width=".8"/></svg>
<svg style="left:772px;top:190px" width="8" height="8" viewBox="0 0 8 8"><path d="M1 2h6l-.6 6H1.600zM0.500 1h7M3 0h2" fill="#6e6e6e" stroke="#6e6e6e" stroke-width=".8"/></svg>
<div class="ptabs" style="top:199px;width:216px"></div>
<svg style="left:786px;top:202px" width="9" height="6" viewBox="0 0 9 6"><path d="M0 1.500l1.500 2 1.500-2z" fill="#ddd"/><path d="M4 .8h5M4 2.600h5M4 4.400h5" stroke="#bbb" stroke-width=".9"/></svg>
<div class="bar" style="top:210px;height:30px"></div>
<svg style="left:704px;top:222px" width="6" height="10" viewBox="0 0 6 10"><rect x="0" y="0" width="5.500" height="9.500" fill="#cfcfcf"/><path d="M1.500 2h2.500v2.500H1.500z" fill="#555"/></svg>
<div style="left:787px;top:241px;width:10px;height:103px;background:#3d3d3d;border-left:1px solid #363636"></div>
<i class="tri" style="left:789.500px;top:244px;border-bottom-color:#eee;border-bottom-width:3px;border-left-width:2.5px;border-right-width:2.5px"></i>
<div style="left:788.500px;top:252px;width:7px;height:10px;background:#8a8a8a;border-radius:1.500px;border:1px solid #a0a0a0"></div>
<i class="tri" style="left:789.500px;top:338px;border-bottom:0;border-top:3px solid #eee;border-left-width:2.5px;border-right-width:2.5px"></i>
<div class="bar" style="top:344px;height:13px;border-top:1px solid #3a3a3a"></div>
<svg style="left:715px;top:346px" width="12" height="9" viewBox="0 0 12 9"><path d="M1 5.500c1.500-2 2.500 2 4 .5L11 1" fill="none" stroke="#ccc" stroke-width="1.200"/></svg>
<svg style="left:733px;top:346px" width="9" height="9" viewBox="0 0 9 9"><rect x=".6" y=".6" width="7.800" height="7.800" fill="none" stroke="#e0e0e0" stroke-width="1.200"/><path d="M.6 4.500h7.800M4.500.6v7.800" stroke="#e0e0e0" stroke-width="1"/></svg>
<svg style="left:753px;top:346px" width="9" height="9" viewBox="0 0 9 8"><path d="M1 0h7v7H3.500L1 4.500z" fill="#e2e2e2"/><path d="M1 4.500h2.500V7" fill="none" stroke="#666" stroke-width=".8"/></svg>
<svg style="left:771px;top:346px" width="8" height="9" viewBox="0 0 8 8"><path d="M1 2h6l-.6 6H1.600zM0.500 1h7M3 0h2" fill="#6e6e6e" stroke="#6e6e6e" stroke-width=".8"/></svg>
<div class="ptabs" style="top:357px;width:216px"></div>
<svg style="left:786px;top:360px" width="9" height="6" viewBox="0 0 9 6"><path d="M0 1.500l1.500 2 1.500-2z" fill="#ddd"/><path d="M4 .8h5M4 2.600h5M4 4.400h5" stroke="#bbb" stroke-width=".9"/></svg>
<!-- layers -->
<div class="bar" style="top:368px;height:55px"></div>
<i style="left:581px;top:387.500px;width:216px;height:1px;background:#454545"></i>
<i style="left:581px;top:404.500px;width:216px;height:1px;background:#454545"></i>
<span class="t" style="left:710.500px;top:371.500px;font-family:'Liberation Serif',serif;font-size:11px;color:#7e7e7e">T</span>
<svg style="left:724px;top:372px" width="10" height="10" viewBox="0 0 10 10"><rect x="2" y="2" width="6" height="6" fill="none" stroke="#8c8c8c" stroke-width="1"/><path d="M1 1h2v2H1zM7 1h2v2H7zM1 7h2v2H1zM7 7h2v2H7z" fill="#8c8c8c"/></svg>
<svg style="left:739px;top:372px" width="10" height="10" viewBox="0 0 10 10"><path d="M1.500 5h6v4.500h-6zM3 5V3a1.800 1.800 0 0 1 3.600 0v2" fill="none" stroke="#8c8c8c" stroke-width="1.200"/></svg>
<div style="left:788px;top:371px;width:5px;height:9px;background:#444;border:1px solid #3a3a3a"></div>
<i style="left:789px;top:372px;width:3px;height:3px;background:#6a6a6a"></i>
<span class="t" style="right:44px;top:391px;font-size:7.100px;color:#e0e0e0">Непрозрачность:</span>
<div class="box" style="left:758px;top:389.500px;width:23.500px;height:11px"></div>
<span class="t" style="left:762px;top:392px;font-size:7px;color:#6e6e6e">100%</span>
<div class="dd" style="left:783.500px;top:389.500px;width:10px;height:11px"></div>
<i class="tri" style="left:786.500px;top:394px;border-bottom:0;border-top:2.500px solid #ddd;border-left-width:2px;border-right-width:2px"></i>
<span class="t" style="left:704px;top:408.500px;font-size:7.100px;color:#e0e0e0;width:52px;text-align:right">Заливка:</span>
<div class="box" style="left:758px;top:406.500px;width:23.500px;height:11px"></div>
<span class="t" style="left:762px;top:409px;font-size:7px;color:#6e6e6e">100%</span>
<div class="dd" style="left:783.500px;top:406.500px;width:10px;height:11px"></div>
<i class="tri" style="left:786.500px;top:411px;border-bottom:0;border-top:2.500px solid #ddd;border-left-width:2px;border-right-width:2px"></i>
<div style="left:581px;top:423px;width:207px;height:21px;background:#596a86"></div>
<svg style="left:770px;top:428px" width="8" height="10" viewBox="0 0 8 10"><path d="M1 4.500h6v5H1zM2.300 4.500V2.800a1.700 1.700 0 0 1 3.400 0v1.700" fill="none" stroke="#e8e8e8" stroke-width="1.100"/></svg>
<div style="left:788px;top:423px;width:9px;height:106px;background:#4a4a4a;border-left:1px solid #3c3c3c"></div>
<div class="bar" style="top:529px;height:15px;border-top:1px solid #383838"></div>
<svg style="left:670px;top:531px" width="112" height="11" viewBox="0 0 112 11">
<g fill="none" stroke="#7a7a7a" stroke-width="1.100"><ellipse cx="3.800" cy="5.500" rx="2.600" ry="1.800"/><ellipse cx="8" cy="5.500" rx="2.600" ry="1.800"/></g>
<text x="19.500" y="8.500" font-family="Liberation Serif,serif" font-style="italic" font-size="9" fill="#8a8a8a">fx</text>
<rect x="35" y="2" width="9.500" height="7.500" fill="#e0e0e0"/><circle cx="39.700" cy="5.700" r="2.300" fill="#555"/>
<circle cx="56" cy="5.500" r="4" fill="#777" stroke="#e0e0e0" stroke-width="1.200"/><path d="M53.200 8.300A4 4 0 0 1 58.800 2.700z" fill="#e8e8e8"/><path d="M61.500 8.500l1.300 1.500 1.300-1.500z" fill="#ddd"/>
<path d="M68.500 2h3.500l1 1.300h5V9.500h-9.500z" fill="#dcdcdc"/>
<path d="M85.500 1.500h7v7.500H88l-2.500-2.500z" fill="#e2e2e2"/><path d="M85.500 6.500H88V9" fill="none" stroke="#666" stroke-width=".8"/>
<path d="M102.500 3.500h6l-.6 6.500h-4.800zM102 2.500h7M104.500 1.500h2" fill="#6e6e6e" stroke="#6e6e6e" stroke-width=".8"/>
</svg>
<div style="left:797px;top:40px;width:3px;height:504px;background:#585858;border-left:1px solid #3a3a3a"></div>

<!-- brush panel -->
<div id="bp"><div class="top"></div><div class="tb"></div><div class="tab"></div></div>
<div id="bpc">
<i style="left:685px;top:156.500px;width:0;height:0;border-right:2.500px solid #ddd;border-top:2px solid transparent;border-bottom:2px solid transparent"></i>
<i style="left:688px;top:156.500px;width:0;height:0;border-left:2.500px solid #ddd;border-top:2px solid transparent;border-bottom:2px solid transparent"></i>
<span class="t" style="left:694.500px;top:153.500px;font-size:8px;font-weight:bold;color:#e6e6e6">×</span>
<svg style="left:692px;top:164px" width="9" height="6" viewBox="0 0 9 6"><path d="M0 1.500l1.500 2 1.500-2z" fill="#ddd"/><path d="M4 .8h5M4 2.600h5M4 4.400h5" stroke="#bbb" stroke-width=".9"/></svg>
<span class="t" style="left:397.500px;top:163.800px;font-size:6.500px;font-weight:bold;color:#f4f4f4">Кисть</span>
<div class="dd" style="left:417.500px;top:177.500px;width:63px;height:10.500px;background:linear-gradient(#727272,#626262);border-color:#3c3c3c"></div>
<span class="t" style="left:417.500px;top:179.500px;width:63px;text-align:center">Наборы кистей</span>
<div style="left:397px;top:195px;width:103.500px;height:246px;border:1px solid #404040;background:#535353"></div>
<i style="left:398px;top:207.500px;width:101px;height:1px;background:#474747"></i>
<span class="t" style="left:398px;top:197.500px;width:101px;text-align:center;font-size:7.050px">Форма отпечатка кисти</span>
<div class="row sel ln" style="top:208.6px"><em class="cb on"></em><svg class="ck" viewBox="0 0 10 10"><path d="M1.2 4.6 L3.6 7 L8 1.600" fill="none" stroke="#fff" stroke-width="1.15"/></svg><span>Динамика формы</span><svg class="lk" viewBox="0 0 8 9"><path d="M1.5 4.5h5v4h-5zM3 4.5V2.2a1.6 1.6 0 0 1 3.2 0V3" fill="none" stroke="#bdbdbd" stroke-width="0.9"/></svg></div><div class="row ln" style="top:221.6px"><em class="cb"></em><span>Рассеивание</span><svg class="lk" viewBox="0 0 8 9"><path d="M1.5 4.5h5v4h-5zM3 4.5V2.2a1.6 1.6 0 0 1 3.2 0V3" fill="none" stroke="#bdbdbd" stroke-width="0.9"/></svg></div><div class="row ln" style="top:234.6px"><em class="cb"></em><span>Текстура</span><svg class="lk" viewBox="0 0 8 9"><path d="M1.5 4.5h5v4h-5zM3 4.5V2.2a1.6 1.6 0 0 1 3.2 0V3" fill="none" stroke="#bdbdbd" stroke-width="0.9"/></svg></div><div class="row ln" style="top:247.6px"><em class="cb"></em><span>Двойная кисть</span><svg class="lk" viewBox="0 0 8 9"><path d="M1.5 4.5h5v4h-5zM3 4.5V2.2a1.6 1.6 0 0 1 3.2 0V3" fill="none" stroke="#bdbdbd" stroke-width="0.9"/></svg></div><div class="row ln" style="top:260.6px"><em class="cb"></em><span>Динамика цвета</span><svg class="lk" viewBox="0 0 8 9"><path d="M1.5 4.5h5v4h-5zM3 4.5V2.2a1.6 1.6 0 0 1 3.2 0V3" fill="none" stroke="#bdbdbd" stroke-width="0.9"/></svg></div><div class="row ln" style="top:273.6px"><em class="cb"></em><span>Передача</span><svg class="lk" viewBox="0 0 8 9"><path d="M1.5 4.5h5v4h-5zM3 4.5V2.2a1.6 1.6 0 0 1 3.2 0V3" fill="none" stroke="#bdbdbd" stroke-width="0.9"/></svg></div><div class="row ln" style="top:286.6px"><em class="cb"></em><span>Положение кисти</span><svg class="lk" viewBox="0 0 8 9"><path d="M1.5 4.5h5v4h-5zM3 4.5V2.2a1.6 1.6 0 0 1 3.2 0V3" fill="none" stroke="#bdbdbd" stroke-width="0.9"/></svg></div><div class="row" style="top:299.6px"><em class="cb"></em><span>Шум</span><svg class="lk" viewBox="0 0 8 9"><path d="M1.5 4.5h5v4h-5zM3 4.5V2.2a1.6 1.6 0 0 1 3.2 0V3" fill="none" stroke="#bdbdbd" stroke-width="0.9"/></svg></div><div class="row" style="top:312.6px"><em class="cb"></em><span>Влажные края</span><svg class="lk" viewBox="0 0 8 9"><path d="M1.5 4.5h5v4h-5zM3 4.5V2.2a1.6 1.6 0 0 1 3.2 0V3" fill="none" stroke="#bdbdbd" stroke-width="0.9"/></svg></div><div class="row" style="top:325.6px"><em class="cb"></em><span>Накладка</span><svg class="lk" viewBox="0 0 8 9"><path d="M1.5 4.5h5v4h-5zM3 4.5V2.2a1.6 1.6 0 0 1 3.2 0V3" fill="none" stroke="#bdbdbd" stroke-width="0.9"/></svg></div><div class="row" style="top:338.6px"><em class="cb on"></em><svg class="ck" viewBox="0 0 10 10"><path d="M1.2 4.6 L3.6 7 L8 1.600" fill="none" stroke="#fff" stroke-width="1.15"/></svg><span>Сглаживание</span><svg class="lk" viewBox="0 0 8 9"><path d="M1.5 4.5h5v4h-5zM3 4.5V2.2a1.6 1.6 0 0 1 3.2 0V3" fill="none" stroke="#bdbdbd" stroke-width="0.9"/></svg></div><div class="row" style="top:351.6px"><em class="cb on"></em><svg class="ck" viewBox="0 0 10 10"><path d="M1.2 4.6 L3.6 7 L8 1.600" fill="none" stroke="#fff" stroke-width="1.15"/></svg><span>Защита текстуры</span><svg class="lk" viewBox="0 0 8 9"><path d="M1.5 4.5h5v4h-5zM3 4.5V2.2a1.6 1.6 0 0 1 3.2 0V3" fill="none" stroke="#bdbdbd" stroke-width="0.9"/></svg></div>
<!-- right controls -->
<span class="t" style="left:506px;top:178.500px">Колебание размера</span>
<div class="in" style="left:664px;top:177.500px;width:34.500px;height:11px"></div><span class="t" style="left:668px;top:180px">0%</span>
<i class="sl" style="top:192.500px"></i><i class="tri" style="left:504px;top:194.800px"></i>
<svg style="left:503.500px;top:207px" width="8" height="8" viewBox="0 0 8 8"><path d="M4 .5L7.700 7.500H.3z" fill="#e8e8e8"/><path d="M4 3v2.500M4 6.200v.8" stroke="#444" stroke-width=".9"/></svg>
<span class="t" style="left:515px;top:207.500px">Управление:</span>
<div class="dd" style="left:560px;top:205.500px;width:99px;height:11px"></div><span class="t" style="left:565px;top:207.500px">Нажим пера</span>
<svg style="left:652px;top:207.500px" width="5" height="8" viewBox="0 0 5 8"><path d="M.5 3L2.500.8l2 2.200zM.5 5l2 2.200L4.500 5z" fill="#eee"/></svg>
<div class="box" style="left:664px;top:205.500px;width:34.500px;height:11px"></div>
<span class="t" style="left:506px;top:223px">Минимальный диаметр</span>
<div class="in" style="left:664px;top:222px;width:34.500px;height:11px"></div><span class="t" style="left:668px;top:224.500px">0%</span>
<i class="sl" style="top:237px"></i><i class="tri" style="left:504px;top:239.200px"></i>
<span class="t dim" style="left:506px;top:250.500px">Масштаб наклона</span>
<div class="box" style="left:664px;top:248.500px;width:34.500px;height:11px"></div>
<i class="sl" style="top:264.500px"></i>
<span class="t" style="left:506px;top:282px">Колебание угла</span>
<div class="in" style="left:664px;top:280.500px;width:34.500px;height:11px"></div><span class="t" style="left:668px;top:283px">0%</span>
<i class="sl" style="top:296px"></i><i class="tri" style="left:504px;top:298.200px"></i>
<span class="t" style="left:515px;top:311px">Управление:</span>
<div class="dd" style="left:560px;top:309px;width:99px;height:11px"></div><span class="t" style="left:565px;top:311px">Начальное направление</span>
<svg style="left:652px;top:311px" width="5" height="8" viewBox="0 0 5 8"><path d="M.5 3L2.500.8l2 2.200zM.5 5l2 2.200L4.500 5z" fill="#eee"/></svg>
<div class="box" style="left:664px;top:309px;width:34.500px;height:11px"></div>
<span class="t" style="left:506px;top:330.500px">Колебание формы</span>
<div class="in" style="left:664px;top:328.500px;width:34.500px;height:11px"></div><span class="t" style="left:668px;top:331px">0%</span>
<i class="sl" style="top:344.500px"></i><i class="tri" style="left:504px;top:346.700px"></i>
<span class="t" style="left:515px;top:358.500px">Управление:</span>
<div class="dd" style="left:560px;top:356.500px;width:99px;height:11px"></div><span class="t" style="left:565px;top:358.500px">Выкл</span>
<svg style="left:652px;top:358.500px" width="5" height="8" viewBox="0 0 5 8"><path d="M.5 3L2.500.8l2 2.200zM.5 5l2 2.200L4.500 5z" fill="#eee"/></svg>
<div class="box" style="left:664px;top:356.500px;width:34.500px;height:11px"></div>
<span class="t dim" style="left:506px;top:374.500px">Минимальная форма</span>
<div class="box" style="left:664px;top:372.500px;width:34.500px;height:11px"></div>
<i class="sl" style="top:388.500px"></i>
<i class="cbx" style="left:504.500px;top:401.500px"></i><span class="t" style="left:515px;top:401.500px">Отразить X колебания</span>
<i class="cbx" style="left:604.500px;top:401.500px"></i><span class="t" style="left:615px;top:401.500px">Отразить Y колебания</span>
<i class="cbx" style="left:504.500px;top:413.500px"></i><span class="t" style="left:515px;top:413.500px">Проекция кисти</span>
<div style="left:397px;top:443px;width:303.500px;height:52px;border:1px solid #474747;background:#535353"></div>
<svg style="left:393px;top:440px" width="311" height="60" viewBox="393 440 311 60"><path d="M414 468.800C440 465 465 461.500 490 462c30 .6 45 5 60 7.500 20 3.500 38 5.600 56 5.300 28-.5 50-3 76-5.600" fill="none" stroke="#fff" stroke-width="7" stroke-linecap="round"/></svg>
<i style="left:394px;top:496px;width:309px;height:1px;background:#454545"></i>
<svg style="left:639px;top:500px" width="12" height="9" viewBox="0 0 12 9"><path d="M1 5.500c1.500-2 2.500 2 4 .5L11 1" fill="none" stroke="#ccc" stroke-width="1.200"/></svg>
<svg style="left:659px;top:500px" width="9" height="9" viewBox="0 0 9 9"><rect x=".6" y=".6" width="7.800" height="7.800" fill="none" stroke="#e0e0e0" stroke-width="1.200"/><path d="M.6 4.500h7.800M4.500.6v7.800" stroke="#e0e0e0" stroke-width="1"/></svg>
<svg style="left:677px;top:500px" width="9" height="9" viewBox="0 0 9 8"><path d="M1 0h7v7H3.500L1 4.500z" fill="#e2e2e2"/><path d="M1 4.500h2.500V7" fill="none" stroke="#666" stroke-width=".8"/></svg>
<i style="left:541px;top:512.500px;width:14px;height:1.500px;background:#3a3a3a"></i>
</div>
<div style="left:0;top:0;width:2px;height:544px;background:#3c3c3c"></div>
</body></html>
